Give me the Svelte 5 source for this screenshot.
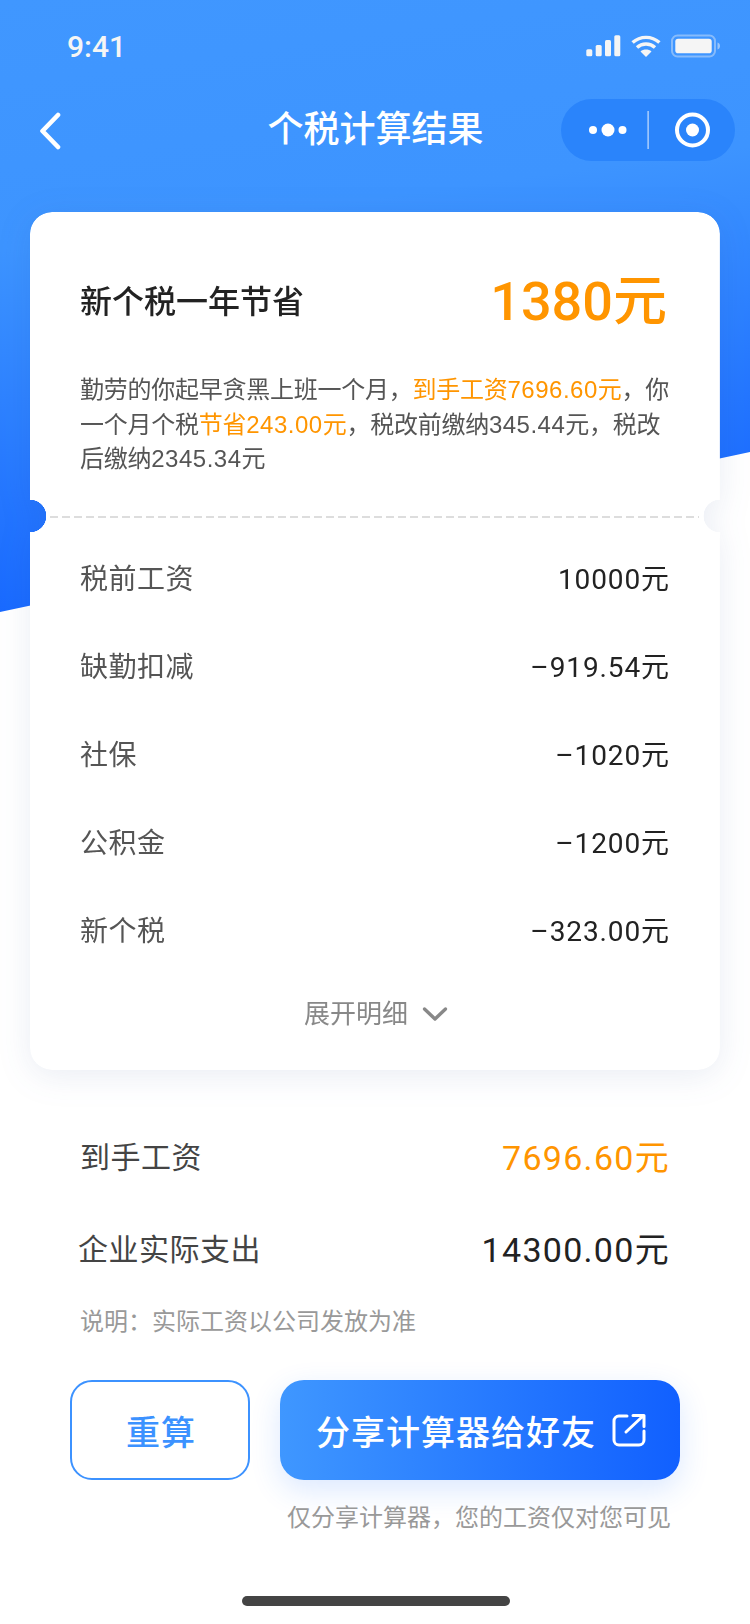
<script>
  const rows = [
    ['税前工资', '10000元'],
    ['缺勤扣减', '–919.54元'],
    ['社保', '–1020元'],
    ['公积金', '–1200元'],
    ['新个税', '–323.00元']
  ];
</script>

<div class="page">
  <div class="bg"></div>
  <div class="content">
    <div class="status">
      <span class="time">9:41</span>
      <svg class="status-icons" width="136" height="26" viewBox="586 33 136 26">
        <g fill="#f5f5f5">
          <rect x="587.3" y="49.3" width="6" height="6.9" rx="1.5"/>
          <rect x="596.7" y="45" width="6" height="11.2" rx="1.5"/>
          <rect x="606" y="40" width="6" height="16.2" rx="1.5"/>
          <rect x="615.3" y="35.3" width="6" height="20.9" rx="1.5"/>
          <path d="M647 57l-5.5-5.6c3-2.6 8-2.6 11 0z"/>
        </g>
        <g fill="none" stroke="#f5f5f5" stroke-width="3.4">
          <path d="M633.6 42.6c7.6-7 19.2-7 26.8 0"/>
          <path d="M638 47.4c5-4.6 13-4.6 18 0"/>
        </g>
        <rect x="673" y="35.5" width="43" height="21" rx="5.5" fill="none" stroke="#f5f5f5" stroke-opacity=".4" stroke-width="2"/>
        <rect x="676.3" y="38.8" width="36.4" height="14.4" rx="2.8" fill="#f5f5f5"/>
        <path d="M718.5 42.5c1.6.6 2.5 1.8 2.5 3.5s-.9 2.9-2.5 3.5z" fill="#f5f5f5" fill-opacity=".5"/>
      </svg>
    </div>

    <div class="nav">
      <svg class="back" width="24" height="38" viewBox="0 0 24 38">
        <path d="M20 3L4.500 19 20 35" fill="none" stroke="#fff" stroke-width="4.600" stroke-linecap="round" stroke-linejoin="round"/>
      </svg>
      <div class="title">个税计算结果</div>
      <div class="capsule">
        <svg width="174" height="62" viewBox="561 99 174 62">
          <circle cx="593" cy="130" r="4" fill="#fff"/>
          <circle cx="608" cy="130" r="6.500" fill="#fff"/>
          <circle cx="622.500" cy="130" r="4" fill="#fff"/>
          <rect x="647.500" y="111" width="1.200" height="38" fill="#fff" fill-opacity=".75"/>
          <circle cx="692.500" cy="130" r="15.500" fill="none" stroke="#fff" stroke-width="4"/>
          <circle cx="692.500" cy="130" r="6.500" fill="#fff"/>
        </svg>
      </div>
    </div>

    <div class="card-shadow">
      <div class="card">
        <div class="head">
          <span class="head-label">新个税一年节省</span>
          <span class="head-value">1380元</span>
        </div>
        <p class="desc">勤劳的你起早贪黑上班一个月，<em>到手工资<span class="n">7696.60</span>元</em>，你一个月个税<em>节省<span class="n">243.00</span>元</em>，税改前缴纳<span class="n">345.44</span>元，税改后缴纳<span class="n">2345.34</span>元</p>
        <div class="dash"></div>
        <div class="rows">
          {#each rows as [label, value]}
            <div class="row">
              <span class="row-label">{label}</span>
              <span class="row-value">{value}</span>
            </div>
          {/each}
        </div>
        <div class="more">
          <span>展开明细</span>
          <svg width="26" height="16" viewBox="0 0 26 16">
            <path d="M2.500 3L13 13 23.500 3" fill="none" stroke="#888" stroke-width="3.400" stroke-linecap="round" stroke-linejoin="round"/>
          </svg>
        </div>
      </div>
    </div>

    <div class="summary">
      <div class="sum-row">
        <span class="sum-label">到手工资</span>
        <span class="sum-value orange">7696.60元</span>
      </div>
      <div class="sum-row">
        <span class="sum-label wide">企业实际支出</span>
        <span class="sum-value">14300.00元</span>
      </div>
      <div class="note">说明：实际工资以公司发放为准</div>
    </div>

    <div class="actions">
      <button class="redo">重算</button>
      <button class="share">
        <span>分享计算器给好友</span>
        <svg width="34" height="34" viewBox="0 0 34 34">
          <path d="M15 3H7a5 5 0 0 0-5 5v19a5 5 0 0 0 5 5h20a5 5 0 0 0 5-5v-9" fill="none" stroke="#fff" stroke-width="3" stroke-linecap="round"/>
          <path d="M14 19L31 3M21 2.500h11v11" fill="none" stroke="#fff" stroke-width="3" stroke-linecap="round" stroke-linejoin="round"/>
        </svg>
      </button>
    </div>
    <div class="caption">仅分享计算器，您的工资仅对您可见</div>
    <div class="home"></div>
  </div>
</div>

<style>
  :global(body) {
    margin: 0;
    background: #fff;
  }
  .page {
    position: relative;
    width: 750px;
    height: 1624px;
    overflow: hidden;
    background: #fff;
    font-family: "Liberation Sans", "Noto Sans CJK SC", sans-serif;
  }
  .bg {
    position: absolute;
    inset: 0 0 auto 0;
    height: 612px;
    background: linear-gradient(172deg, #4097ff 0%, #3d94ff 35%, #2476ff 70%, #0f5fff 100%);
    clip-path: polygon(0 0, 100% 0, 100% 452px, 0 612px);
  }
  .content {
    position: relative;
    display: flex;
    flex-direction: column;
  }
  .status {
    height: 88px;
    display: flex;
    justify-content: space-between;
    padding: 33px 29px 0 67px;
    box-sizing: border-box;
  }
  .time {
    color: #f5f5f5;
    font-size: 30px;
    line-height: 28px;
    font-weight: 500;
    font-family: Roboto, "Liberation Sans", sans-serif;
  }
  .status-icons {
    display: block;
  }
  .nav {
    height: 84px;
    display: grid;
    grid-template-columns: 1fr auto 1fr;
    align-items: start;
    padding: 11px 15px 0 38px;
    box-sizing: border-box;
  }
  .back {
    margin-top: 13px;
  }
  .title {
    font-size: 36px;
    line-height: 62px;
    color: #fff;
    font-weight: 500;
    margin-left: -17px;
    margin-right: 5px;
  }
  .capsule {
    justify-self: end;
    width: 174px;
    height: 62px;
    border-radius: 31px;
    background: #2a84fb;
  }
  .capsule svg {
    display: block;
  }
  .card-shadow {
    margin: 40px 30px 0;
    width: 690px;
    filter: drop-shadow(0 6px 16px rgba(50, 80, 150, 0.1));
  }
  .card {
    height: 858px;
    box-sizing: border-box;
    background: #fff;
    border-radius: 22px;
    padding: 0 50px 0 50px;
    -webkit-mask:
      radial-gradient(circle at 0 304px, transparent 16px, #000 16.500px) left / 51% 100% no-repeat,
      radial-gradient(circle at 100% 304px, transparent 16px, #000 16.500px) right / 51% 100% no-repeat;
    mask:
      radial-gradient(circle at 0 304px, transparent 16px, #000 16.500px) left / 51% 100% no-repeat,
      radial-gradient(circle at 100% 304px, transparent 16px, #000 16.500px) right / 51% 100% no-repeat;
  }
  .head {
    height: 180px;
    box-sizing: border-box;
    padding-bottom: 7px;
    display: flex;
    justify-content: space-between;
    align-items: center;
  }
  .head-label {
    font-size: 32px;
    font-weight: 500;
    color: #222;
  }
  .head-value {
    font-family: Roboto, "Noto Sans CJK SC", sans-serif;
    font-size: 54px;
    font-weight: 500;
    color: #ff9500;
    margin-bottom: 4px;
    margin-right: 3px;
  }
  .desc {
    margin: -19px -4px 0 0;
    height: 139px;
    font-size: 24px;
    line-height: 34.500px;
    color: #555;
    letter-spacing: -0.25px;
  }
  .desc em {
    font-style: normal;
    color: #ff9500;
  }
  .n {
    letter-spacing: 0.5px;
  }
  .dash {
    margin: 0 -29px 0 -30px;
    height: 2px;
    margin-top: 4px;
    background: repeating-linear-gradient(90deg, #ddd 0 8px, transparent 8px 12px);
  }
  .rows {
    display: flex;
    flex-direction: column;
    margin-top: 15px;
  }
  .row {
    height: 88px;
    display: flex;
    justify-content: space-between;
    align-items: center;
    font-size: 28px;
  }
  .row-label {
    color: #555;
    letter-spacing: 0.5px;
  }
  .row-value {
    color: #222;
    font-family: Roboto, "Noto Sans CJK SC", sans-serif;
    font-weight: 400;
    letter-spacing: 0.9px;
  }
  .more {
    display: flex;
    justify-content: center;
    align-items: center;
    gap: 14px;
    margin-top: 21px;
    font-size: 26px;
    line-height: 40px;
    color: #888;
    padding-left: 2px;
  }
  .summary {
    padding: 0 80px 0 80px;
    margin-top: 39px;
  }
  .sum-row {
    height: 92px;
    display: flex;
    justify-content: space-between;
    align-items: center;
  }
  .sum-label {
    font-size: 30px;
    color: #444;
    letter-spacing: 0.5px;
  }
  .wide {
    margin-left: -2px;
  }
  .sum-value {
    font-family: Roboto, "Noto Sans CJK SC", sans-serif;
    font-weight: 400;
    font-size: 34px;
    color: #222;
    letter-spacing: 1.3px;
  }
  .orange {
    color: #ff9500;
  }
  .note {
    margin-top: 11px;
    font-size: 24px;
    line-height: 36px;
    color: #999;
  }
  .actions {
    display: flex;
    gap: 30px;
    padding-left: 70px;
    margin-top: 40px;
  }
  button {
    font-family: inherit;
    height: 100px;
    box-sizing: border-box;
    padding: 0;
    display: flex;
    align-items: center;
    justify-content: center;
  }
  .redo {
    width: 180px;
    border: 2px solid #3c92ff;
    border-radius: 22px;
    background: #fff;
    color: #3c92ff;
    font-size: 34px;
    font-weight: 500;
    letter-spacing: 1px;
    padding-left: 2px;
  }
  .share {
    width: 400px;
    border: none;
    border-radius: 24px;
    background: linear-gradient(90deg, #3f97ff, #1160ff);
    color: #fff;
    font-size: 34px;
    font-weight: 500;
    letter-spacing: 1px;
    gap: 16px;
    padding-left: 2px;
    box-shadow: 0 10px 30px rgba(30, 110, 255, 0.16);
  }
  .caption {
    margin-top: 20px;
    padding-right: 79px;
    text-align: right;
    font-size: 24px;
    line-height: 36px;
    color: #999;
  }
  .home {
    width: 268px;
    height: 10px;
    border-radius: 5px;
    background: #444;
    margin: 60px 0 0 242px;
  }
</style>
